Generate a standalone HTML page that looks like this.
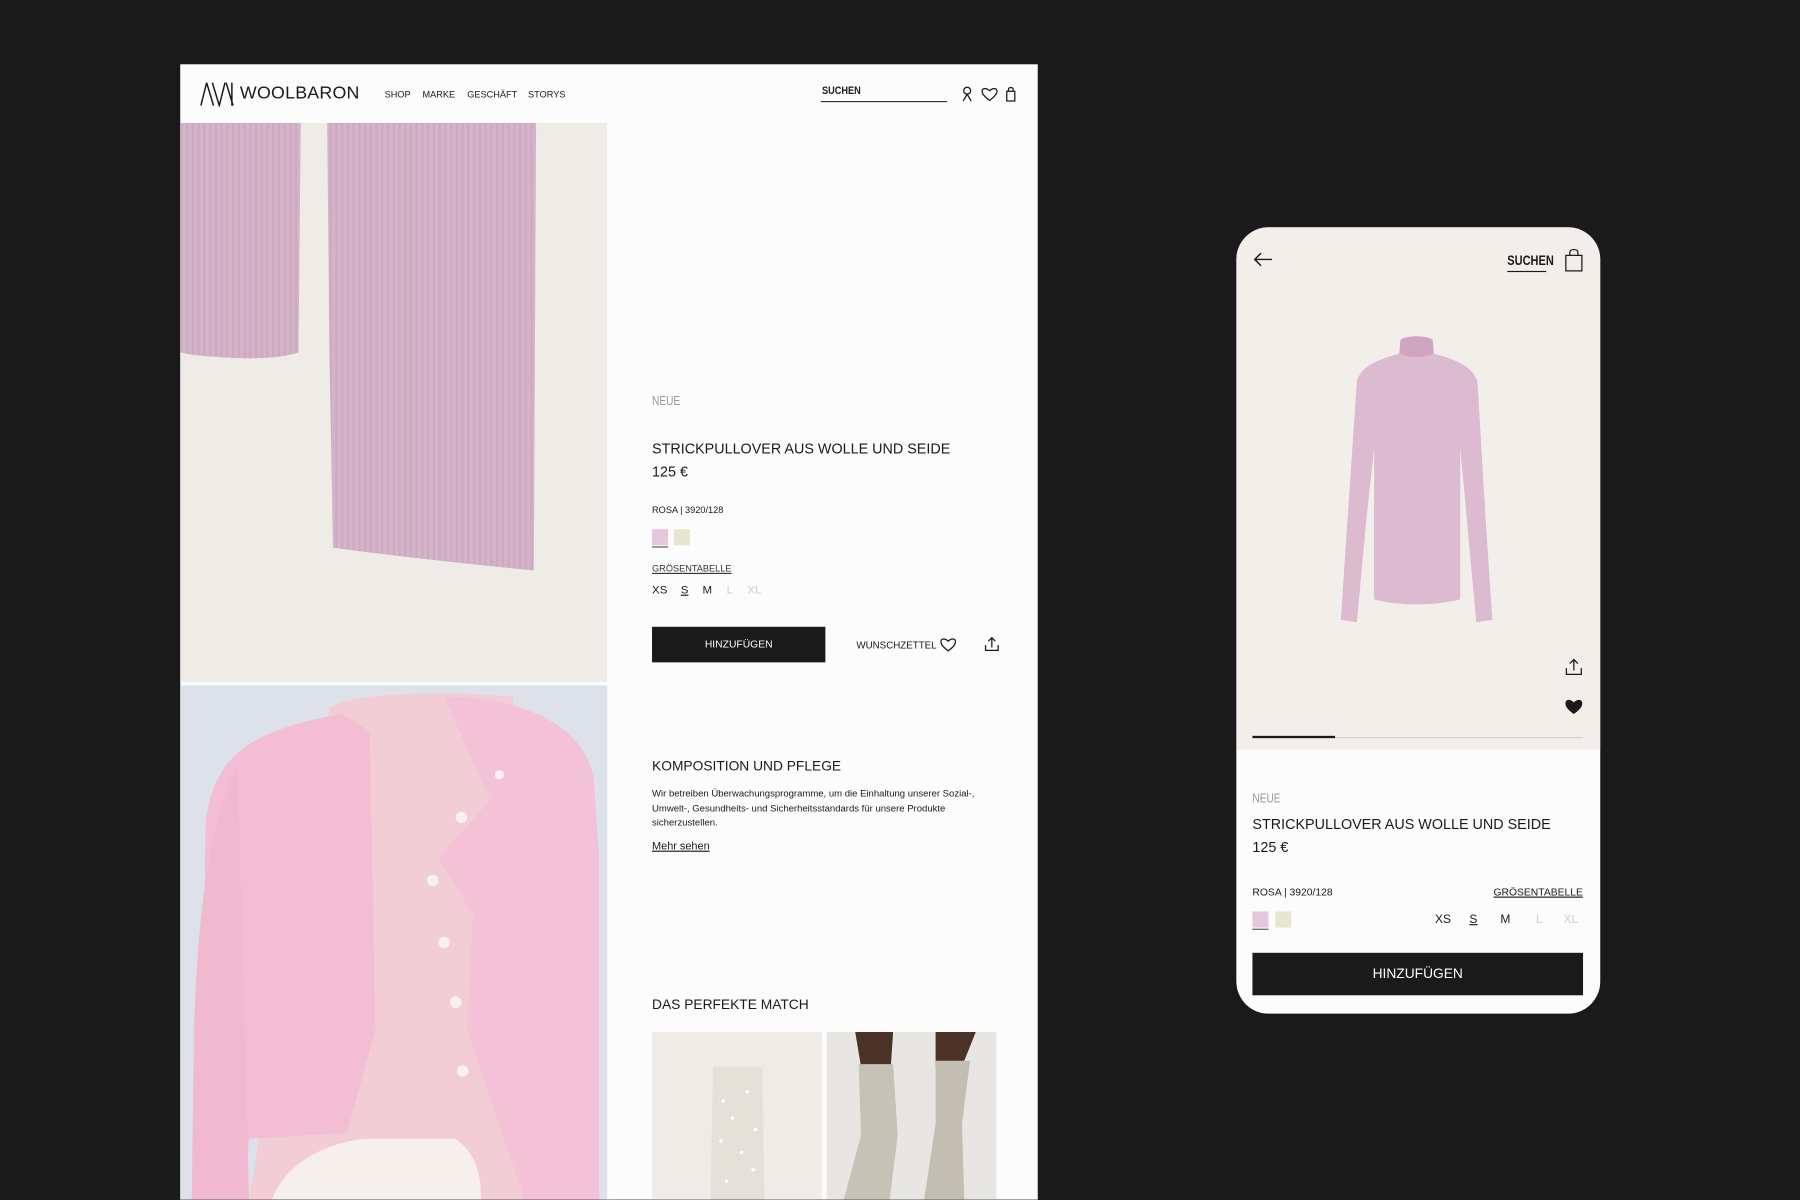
<!DOCTYPE html>
<html><head><meta charset="utf-8"><style>
*{margin:0;padding:0;box-sizing:border-box}
html,body{width:1800px;height:1200px;overflow:hidden;background:#1a1a1a;font-family:"Liberation Sans",sans-serif;color:#1a1a1a}
#w{position:absolute;left:0;top:0;width:1568px;height:1045px;transform:scale(1.14796);transform-origin:0 0;background:#1a1a1a}
.a{position:absolute;white-space:nowrap}
.cond{font-family:"Liberation Sans Narrow","Liberation Sans",sans-serif;transform:scaleX(.8);transform-origin:0 0}
</style></head><body><div id="w">
<!-- desktop -->
<div class="a" style="left:157px;top:56px;width:747px;height:989px;background:#fcfcfc;overflow:hidden">
 <svg class="a" style="left:17px;top:15px" width="30" height="22" viewBox="0 0 30 22" fill="none" stroke="#1a1a1a" stroke-width="1.3"><path d="M1 21 L6 1 M6 1 L12 21 M11 1 L17 21 L22 1 M23 1 L29 21 M28 1 L28 21"/></svg>
 <div class="a" style="left:52px;top:17px;font-size:15.5px;letter-spacing:.2px">WOOLBARON</div>
 <div class="a" style="left:178px;top:22px;font-size:8px">SHOP</div>
 <div class="a" style="left:211px;top:22px;font-size:8px">MARKE</div>
 <div class="a" style="left:250px;top:22px;font-size:8px">GESCHÄFT</div>
 <div class="a" style="left:303px;top:22px;font-size:8px">STORYS</div>
 <div class="a cond" style="left:559px;top:18px;font-size:10px;font-weight:bold">SUCHEN</div>
 <div class="a" style="left:558px;top:32px;width:110px;height:1px;background:#333"></div>
 <svg class="a" style="left:680px;top:19px" width="54" height="14" viewBox="0 0 54 14" fill="none" stroke="#1a1a1a" stroke-width="1.1"><circle cx="5.5" cy="4" r="3"/><path d="M2 13 L5.5 7 L9 13"/><path d="M25 12.5 C19 8 18.5 6 18.5 4.5 C18.5 2 21.5 1 25 4 C28.5 1 31.5 2 31.5 4.5 C31.5 6 31 8 25 12.5Z"/><path d="M40 4.5 H47 V13 H40 Z M41.5 4.5 V2.5 C41.5 1 45.5 1 45.5 2.5 V4.5"/></svg>
 <!-- top image -->
 <div class="a" style="left:0;top:51px;width:372px;height:487px;background:#efece8;overflow:hidden">
  <svg width="372" height="487"><defs><pattern id="rib" width="5" height="10" patternUnits="userSpaceOnUse"><rect width="5" height="10" fill="#d5b3c8"/><rect width="2" height="10" fill="#ccaac0"/></pattern></defs>
  <path d="M0 0 H105 L103 200 C80 208 40 205 10 202 L0 200Z" fill="url(#rib)"/>
  <path d="M128 0 H310 L308 390 C260 385 190 378 133 370 L130 200Z" fill="url(#rib)"/>
  </svg>
 </div>
 <!-- bottom image -->
 <div class="a" style="left:0;top:541px;width:372px;height:448px;background:#d8dde6;overflow:hidden">
  <svg width="372" height="448">
  <rect x="0" y="0" width="372" height="448" fill="#dde1e9"/>
  <path d="M130 20 C150 5 240 5 290 10 L300 448 H60 Z" fill="#f2cdd5"/>
  <path d="M80 448 C90 420 120 400 160 395 L240 395 C260 410 262 430 262 448Z" fill="#f5f0ec"/>
  <path d="M18 448 L22 120 C30 60 60 40 140 25 L165 40 L170 300 L145 390 L60 395 L55 448Z" fill="#f3bdd4"/>
  <path d="M230 10 C290 10 350 30 360 80 L365 150 L365 448 H300 L270 360 L250 300 L255 200 L225 150 L270 100 Z" fill="#f4c2d7"/>
  <path d="M10 448 L12 300 C15 200 25 120 50 70 L60 448 Z" fill="#f1b9d0"/>
  <g fill="#f7f1f2"><circle cx="278" cy="78" r="4"/><circle cx="245" cy="115" r="5"/><circle cx="220" cy="170" r="5"/><circle cx="230" cy="224" r="5"/><circle cx="240" cy="276" r="5"/><circle cx="246" cy="336" r="5"/></g>
  </svg>
 </div>
 <div class="a" style="left:372px;top:51px;width:4px;height:938px;background:#fcfcfc"></div>
 <!-- content -->
 <div class="a cond" style="left:411px;top:288px;font-size:11px;color:#999">NEUE</div>
 <div class="a" style="left:411px;top:328px;font-size:12.5px">STRICKPULLOVER AUS WOLLE UND SEIDE</div>
 <div class="a" style="left:411px;top:348px;font-size:12.5px">125 €</div>
 <div class="a" style="left:411px;top:384px;font-size:8px">ROSA | 3920/128</div>
 <div class="a" style="left:411px;top:405px;width:14px;height:14px;background:#e4c7dc"></div>
 <div class="a" style="left:411px;top:420px;width:14px;height:1px;background:#555"></div>
 <div class="a" style="left:430px;top:405px;width:14px;height:14px;background:#e8e5d0"></div>
 <div class="a" style="left:411px;top:435px;font-size:8px;text-decoration:underline;color:#333">GRÖSENTABELLE</div>
 <div class="a" style="left:411px;top:453px;font-size:10px">XS</div>
 <div class="a" style="left:436px;top:453px;font-size:10px;text-decoration:underline">S</div>
 <div class="a" style="left:455px;top:453px;font-size:10px">M</div>
 <div class="a" style="left:476px;top:453px;font-size:10px;color:#ccc">L</div>
 <div class="a" style="left:494px;top:453px;font-size:10px;color:#ccc">XL</div>
 <div class="a" style="left:411px;top:490px;width:151px;height:31px;background:#1a1a1a;color:#fff;font-size:9px;text-align:center;line-height:31px">HINZUFÜGEN</div>
 <div class="a" style="left:589px;top:501px;font-size:8.5px">WUNSCHZETTEL</div>
 <svg class="a" style="left:662px;top:499px" width="14" height="13" viewBox="0 0 14 13" fill="none" stroke="#1a1a1a" stroke-width="1.1"><path d="M7 12 C1 7.5 .7 5.5 .7 4 C.7 1.5 3.7 .5 7 3.5 C10.3 .5 13.3 1.5 13.3 4 C13.3 5.5 13 7.5 7 12Z"/></svg>
 <svg class="a" style="left:700px;top:498px" width="14" height="14" viewBox="0 0 14 14" fill="none" stroke="#1a1a1a" stroke-width="1.1"><path d="M7 10 V1.5 M4 4.5 L7 1.5 L10 4.5 M1.5 8 V12.5 H12.5 V8"/></svg>
 <div class="a" style="left:411px;top:604px;font-size:12px">KOMPOSITION UND PFLEGE</div>
 <div class="a" style="left:411px;top:629px;font-size:8.3px;line-height:12.7px;white-space:normal;width:300px">Wir betreiben Überwachungsprogramme, um die Einhaltung unserer Sozial-, Umwelt-, Gesundheits- und Sicherheitsstandards für unsere Produkte sicherzustellen.</div>
 <div class="a" style="left:411px;top:676px;font-size:9.5px;text-decoration:underline">Mehr sehen</div>
 <div class="a" style="left:411px;top:812px;font-size:12px">DAS PERFEKTE MATCH</div>
 <div class="a" style="left:411px;top:843px;width:148px;height:146px;background:#efece7;overflow:hidden">
  <svg width="148" height="146"><path d="M53 30 H96 L98 146 H51Z" fill="#e4e1d8"/><g fill="#fff"><circle cx="62" cy="60" r="1.5"/><circle cx="83" cy="52" r="1.5"/><circle cx="70" cy="75" r="1.5"/><circle cx="90" cy="85" r="1.5"/><circle cx="60" cy="95" r="1.5"/><circle cx="78" cy="105" r="1.5"/><circle cx="88" cy="120" r="1.5"/><circle cx="65" cy="130" r="1.5"/></g></svg>
 </div>
 <div class="a" style="left:563px;top:843px;width:148px;height:146px;background:#e8e6e3;overflow:hidden">
  <svg width="148" height="146"><path d="M25 0 H58 L56 30 H30Z M95 0 H130 L118 30 H95Z" fill="#4a3226"/><path d="M28 28 H58 L62 90 L55 146 H15 L30 90Z" fill="#c5c2b6"/><path d="M95 25 H125 L118 80 L120 146 H85 L95 80Z" fill="#c2beb2"/></svg>
 </div>
</div>
<!-- phone -->
<div class="a" style="left:1077px;top:198px;width:317px;height:685px;background:#fcfcfc;border-radius:28px;overflow:hidden">
 <div class="a" style="left:0;top:0;width:317px;height:455px;background:#f2efeb"></div>
 <svg class="a" style="left:14px;top:21px" width="18" height="14" viewBox="0 0 18 14" fill="none" stroke="#1a1a1a" stroke-width="1.3"><path d="M17 7 H2 M7.5 1.5 L2 7 L7.5 12.5"/></svg>
 <div class="a cond" style="left:236px;top:22px;font-size:12px;font-weight:bold">SUCHEN</div>
 <div class="a" style="left:236px;top:38px;width:34px;height:1px;background:#1a1a1a"></div>
 <svg class="a" style="left:286px;top:18px" width="16" height="21" viewBox="0 0 16 21" fill="none" stroke="#1a1a1a" stroke-width="1.1"><path d="M1 6.5 H15 V20 H1Z M4.5 6.5 V4 C4.5 .5 11.5 .5 11.5 4 V6.5"/></svg>
 <svg class="a" style="left:85px;top:92px" width="145" height="262" viewBox="0 0 145 262">
  <path d="M58 6 C63 2 81 2 86 6 L87 18 C105 23 120 28 125 42 L132 160 L138 250 L124 252 L116 165 L110 100 L110 232 C88 238 55 238 35 232 L35 100 L28 165 L20 252 L6 250 L12 160 L20 42 C24 28 40 23 57 18Z" fill="#dcbad0"/>
  <path d="M58 6 C63 2 81 2 86 6 L87 18 C78 22 68 22 57 18Z" fill="#cfa5c1"/>
 </svg>
 <svg class="a" style="left:286px;top:375px" width="16" height="16" viewBox="0 0 16 16" fill="none" stroke="#1a1a1a" stroke-width="1.1"><path d="M8 11 V1.5 M4.5 5 L8 1.5 L11.5 5 M1.5 9 V14.5 H14.5 V9"/></svg>
 <svg class="a" style="left:286px;top:410px" width="16" height="15" viewBox="0 0 16 15"><path d="M8 14 C1 9 .7 6.5 .7 4.5 C.7 1.5 4.5 .3 8 3.8 C11.5 .3 15.3 1.5 15.3 4.5 C15.3 6.5 15 9 8 14Z" fill="#1a1a1a"/></svg>
 <div class="a" style="left:14px;top:444px;width:288px;height:1px;background:#d8d5d0"></div>
 <div class="a" style="left:14px;top:443px;width:72px;height:2px;background:#1a1a1a"></div>
 <div class="a cond" style="left:14px;top:492px;font-size:11px;color:#999">NEUE</div>
 <div class="a" style="left:14px;top:513px;font-size:12.5px">STRICKPULLOVER AUS WOLLE UND SEIDE</div>
 <div class="a" style="left:14px;top:533px;font-size:12.5px">125 €</div>
 <div class="a" style="left:14px;top:574px;font-size:9px">ROSA | 3920/128</div>
 <div class="a" style="left:224px;top:574px;font-size:9px;text-decoration:underline">GRÖSENTABELLE</div>
 <div class="a" style="left:14px;top:596px;width:14px;height:14px;background:#e4c7dc"></div>
 <div class="a" style="left:14px;top:611px;width:14px;height:1px;background:#555"></div>
 <div class="a" style="left:34px;top:596px;width:14px;height:14px;background:#e8e5d0"></div>
 <div class="a" style="left:173px;top:597px;font-size:10.5px">XS</div>
 <div class="a" style="left:203px;top:597px;font-size:10.5px;text-decoration:underline">S</div>
 <div class="a" style="left:230px;top:597px;font-size:10.5px">M</div>
 <div class="a" style="left:261px;top:597px;font-size:10.5px;color:#ccc">L</div>
 <div class="a" style="left:285px;top:597px;font-size:10.5px;color:#ccc">XL</div>
 <div class="a" style="left:14px;top:632px;width:288px;height:37px;background:#1a1a1a;color:#fff;font-size:12px;text-align:center;line-height:37px">HINZUFÜGEN</div>
</div>
</div></body></html>
